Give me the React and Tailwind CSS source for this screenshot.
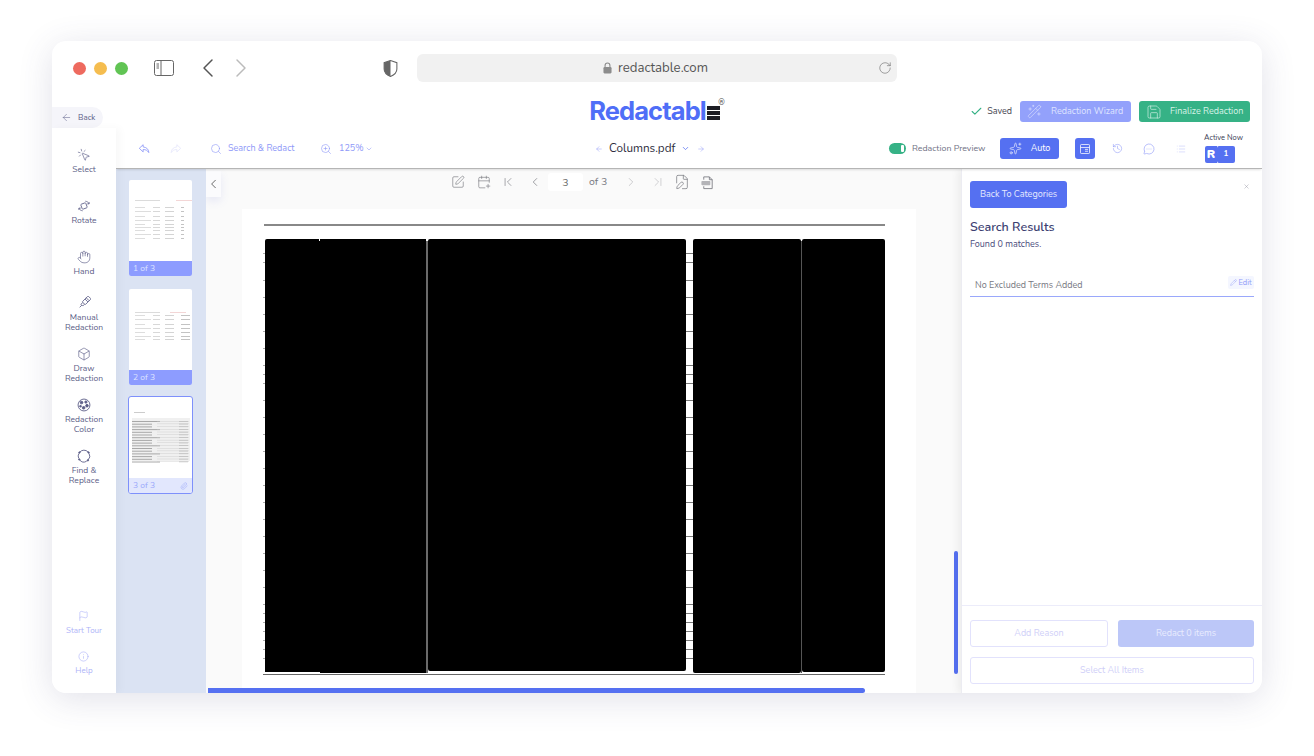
import {
  ArrowLeft, ArrowRight, Box, Check, ChevronDown, ChevronFirst, ChevronLast, ChevronLeft, ChevronRight,
  CalendarPlus, FilePen, Flag, Hand, History, Info, List, MessageCircleMore,
  MousePointerClick, Paperclip, Pencil, RotateCw, Save, Search, Sparkles, SquarePen,
  WandSparkles, X, ZoomIn,
} from 'lucide-react';

const FONT = "font-['Nunito','Lato','Noto_Sans',sans-serif]";

function RotateIcon({ className }) {
  return (
    <svg viewBox="0 0 16 16" fill="none" stroke="currentColor" strokeWidth="0.9" className={className}>
      <rect x="5" y="5" width="6" height="6" rx="1" transform="rotate(-20 8 8)" />
      <path d="M9.5 2.5c2 .2 3.6 1.4 4.3 3M13.8 3.4v2.2h-2.1M6.5 13.5c-2-.2-3.6-1.4-4.3-3M2.2 12.6v-2.2h2.1" />
    </svg>
  );
}

function MarkerIcon({ className }) {
  return (
    <svg viewBox="0 0 16 16" fill="none" stroke="currentColor" strokeWidth="0.9" className={className}>
      <g transform="rotate(45 8 8)">
        <rect x="5.6" y="-1" width="4.8" height="9.5" rx="1" />
        <path d="M5.6 2h4.8M5.6 4h4.8M6.6 8.5v3h2.8v-3M8 11.5V15" />
      </g>
    </svg>
  );
}

function ColorIcon({ className }) {
  return (
    <svg viewBox="0 0 16 16" fill="none" stroke="currentColor" strokeWidth="1" className={className}>
      <circle cx="8" cy="8" r="6.8" />
      <circle cx="5.2" cy="5.2" r="1.5" fill="currentColor" />
      <circle cx="10.2" cy="4.6" r="1.3" fill="currentColor" />
      <circle cx="11.4" cy="8.8" r="1.5" fill="currentColor" />
      <circle cx="7.6" cy="11.2" r="1.5" fill="currentColor" />
      <circle cx="4" cy="9.4" r="1" fill="currentColor" />
    </svg>
  );
}

function FindIcon({ className }) {
  return (
    <svg viewBox="0 0 16 16" fill="none" stroke="currentColor" strokeWidth="1" className={className}>
      <path d="M3.2 3.6A6.2 6.2 0 0 1 12.6 3.4M13.8 5a6.2 6.2 0 0 1-1.2 7.6M11 14a6.2 6.2 0 0 1-8-1.6M2 10.8A6.2 6.2 0 0 1 2.2 5" />
      <circle cx="2.8" cy="4" r="0.8" fill="currentColor" />
      <circle cx="13.2" cy="4" r="0.8" fill="currentColor" />
      <circle cx="2.6" cy="12" r="0.8" fill="currentColor" />
      <circle cx="12.4" cy="13" r="0.8" fill="currentColor" />
    </svg>
  );
}

function PanelIcon({ className }) {
  return (
    <svg viewBox="0 0 16 16" fill="none" stroke="currentColor" strokeWidth="1" className={className}>
      <rect x="2" y="2" width="12" height="12" rx="1" />
      <path d="M2 6h12M8 8.5h4M8 11h4" />
    </svg>
  );
}

function PdfIcon({ className }) {
  return (
    <svg viewBox="0 0 16 16" fill="none" stroke="currentColor" strokeWidth="0.9" className={className}>
      <path d="M4 5V2h6l3 3v9.5H4V12" />
      <path d="M10 2v3h3" />
      <rect x="1.5" y="6.5" width="9.5" height="4.5" rx="0.8" fill="#b4b4b8" stroke="none" />
    </svg>
  );
}

function UndoIcon({ className }) {
  return (
    <svg viewBox="0 0 14 14" fill="none" stroke="currentColor" strokeWidth="1" strokeLinejoin="round" className={className}>
      <path d="M6 2 1.5 6.2 6 10.4V7.6c3 0 5 1 6.6 3.6 0-3.8-2.6-6.2-6.6-6.6z" />
    </svg>
  );
}

const TOOLS = [
  { label: ['Select'], Icon: MousePointerClick },
  { label: ['Rotate'], Icon: RotateIcon },
  { label: ['Hand'], Icon: Hand },
  { label: ['Manual', 'Redaction'], Icon: MarkerIcon },
  { label: ['Draw', 'Redaction'], Icon: Box },
  { label: ['Redaction', 'Color'], Icon: ColorIcon },
  { label: ['Find &', 'Replace'], Icon: FindIcon },
];

function Sidebar() {
  return (
    <aside className="w-[64px] shrink-0 bg-white flex flex-col pt-[7px] pb-[17px] z-20 shadow-[4px_0_8px_rgba(0,0,0,0.03)]">
      {TOOLS.map(({ label, Icon }) => (
        <div key={label[0]} className="h-[51px] shrink-0 flex flex-col items-center justify-center text-[#5a5c86]">
          <Icon className="w-[14px] h-[14px] my-px" strokeWidth={1.1} />
          <div className="mt-px text-[8.5px] leading-[10px] text-center">
            {label.map((l) => <div key={l}>{l}</div>)}
          </div>
        </div>
      ))}
      <div className="mt-auto flex flex-col items-center gap-[15px] text-[#adb2f8]">
        <div className="flex flex-col items-center">
          <Flag className="w-[11px] h-[12px] mb-[4px]" strokeWidth={1.3} />
          <span className="text-[8px] leading-[10px]">Start Tour</span>
        </div>
        <div className="flex flex-col items-center">
          <Info className="w-[11px] h-[11px] mb-[4px]" strokeWidth={1.3} />
          <span className="text-[8px] leading-[10px]">Help</span>
        </div>
      </div>
    </aside>
  );
}

function Toolbar() {
  return (
    <div className="h-[41px] shrink-0 flex items-center pt-px pl-[22px] bg-white border-b border-b-[#b5b5b5] shadow-[0_2px_2px_-1px_rgba(0,0,0,0.12)] z-10 relative text-[#8e98f8]">
      <UndoIcon className="w-[12px] h-[12px]" />
      <UndoIcon className="w-[12px] h-[12px] ml-[20px] -scale-x-100 text-[#e6e8fb]" />
      <Search className="w-[12px] h-[12px] ml-[28px]" strokeWidth={1.2} />
      <span className="ml-[6px] text-[9px] w-[67px] whitespace-nowrap">Search &amp; Redact</span>
      <ZoomIn className="w-[12px] h-[12px] ml-[25px]" strokeWidth={1.2} />
      <span className="ml-[7px] text-[9px] w-[25px]">125%</span>
      <ChevronDown className="w-[8px] h-[8px] ml-[1px]" strokeWidth={1.6} />

      <ArrowLeft className="w-[8px] h-[8px] ml-[222px]" strokeWidth={1.4} />
      <span className="ml-[6px] text-[11.7px] text-[#2c2c3c] w-[66px] whitespace-nowrap">Columns.pdf</span>
      <ChevronDown className="w-[9px] h-[9px] ml-[6px] text-[#5570f1]" strokeWidth={2} />
      <ArrowRight className="w-[8px] h-[8px] ml-[7px]" strokeWidth={1.4} />

      <div className="ml-[184px] w-[17px] h-[11px] rounded-full bg-[#36b286] flex items-center justify-end pr-[2px]">
        <div className="w-[3px] h-[7px] rounded-[1px] bg-white" />
      </div>
      <span className="ml-[6px] text-[8.8px] text-[#6f7184] w-[74px] whitespace-nowrap">Redaction Preview</span>
      <button className="ml-[14px] w-[59px] h-[21px] rounded-[3px] bg-[#5570f1] text-white text-[9px] flex items-center justify-center gap-[9px]">
        <Sparkles className="w-[13px] h-[13px]" strokeWidth={1.1} />
        Auto
      </button>
      <button className="ml-[16px] w-[20px] h-[21px] rounded-[3px] bg-[#5570f1] text-white flex items-center justify-center">
        <PanelIcon className="w-[12px] h-[12px]" />
      </button>
      <History className="w-[11px] h-[11px] ml-[17px]" strokeWidth={1.2} />
      <MessageCircleMore className="w-[12px] h-[12px] ml-[20px]" strokeWidth={1.2} />
      <List className="w-[10px] h-[10px] ml-[21px] text-[#c3c8fa]" strokeWidth={1.4} />
      <div className="ml-[18px] -mt-[2px] flex flex-col items-start">
        <span className="text-[7.5px] leading-[10px] text-[#3b3d55] whitespace-nowrap">Active Now</span>
        <div className="flex mt-[3px] ml-px">
          <span className="w-[12px] h-[17px] bg-[#5570f1] text-white text-[12px] font-black rounded-l-[2px] flex items-center justify-center">R</span>
          <span className="w-[18px] h-[17px] bg-[#5570f1] text-white text-[8px] font-bold rounded-[2px] flex items-center justify-center">1</span>
        </div>
      </div>
    </div>
  );
}

const THUMB_ROWS = {
  1: [27, 31, 36, 40, 44, 47, 50, 54, 58],
  2: [26, 30, 35, 39, 43, 47, 50],
};

function ThumbDoc({ n }) {
  if (n === 3) {
    const rows = [...Array(16)].map((_, i) => 24 + i * 2.7);
    return (
      <svg viewBox="0 0 63 81" className="w-full h-full">
        <rect x="5" y="15" width="11" height="1" fill="#ccc" />
        <rect x="3" y="21" width="58" height="43" fill="#f0f0f0" />
        {rows.map((y, i) => (
          <g key={y}>
            <rect x="3" y={y} width={i % 3 === 0 ? 28 : 20} height="1" fill="#a8a8a8" />
            <rect x="28" y={y} width="32" height="0.4" fill="#c8c8c8" />
            <rect x="50" y={y} width="9" height="0.7" fill="#bbb" />
          </g>
        ))}
      </svg>
    );
  }
  const rows = THUMB_ROWS[n];
  return (
    <svg viewBox="0 0 63 81" className="w-full h-full">
      <rect x="6" y={n === 1 ? 20 : 23} width="25" height="0.7" fill="#ccc" />
      <rect x={n === 1 ? 47 : 41} y={n === 1 ? 20 : 23} width="16" height="0.7" fill="#eec4c4" />
      {rows.map((y, i) => (
        <g key={y}>
          <rect x="6" y={y} width={i % 2 ? 16 : 10} height="0.5" fill="#bbb" />
          <rect x="24" y={y} width="7" height="0.5" fill="#b0b0b0" />
          <rect x="36" y={y} width="9" height="0.6" fill="#b8b8b8" />
          <rect x="52" y={y} width={n === 1 ? 3 : 9} height="0.7" fill="#aaa" />
        </g>
      ))}
    </svg>
  );
}

function ThumbRail() {
  return (
    <div className="w-[90px] shrink-0 bg-[#dbe3f3] flex flex-col pt-[11px] pl-[13px] gap-[13px]">
      {[1, 2].map((n) => (
        <div key={n} className="w-[63px] h-[96px] bg-white rounded-[2px] overflow-hidden flex flex-col">
          <div className="flex-1 min-h-0"><ThumbDoc n={n} /></div>
          <div className="h-[15px] bg-[#8d9cff] text-[#dfe4ff] text-[8.5px] pl-[4px] flex items-center">{n} of 3</div>
        </div>
      ))}
      <div className="-mt-[2px] -ml-[1px] w-[65px] h-[98px] bg-white rounded-[3px] border-[1.5px] border-[#7e90fb] overflow-hidden flex flex-col">
        <div className="flex-1 min-h-0"><ThumbDoc n={3} /></div>
        <div className="h-[15px] bg-[#e2e7fd] text-[#9aa7fb] text-[8.5px] px-[4px] flex items-center justify-between">
          3 of 3
          <Paperclip className="w-[8px] h-[8px]" strokeWidth={1.4} />
        </div>
      </div>
    </div>
  );
}

const TICKS = [14, 23, 41, 58, 75, 92, 109, 126, 135, 144, 161, 178, 195, 212, 229, 246, 263, 280, 297, 314, 331, 348, 365, 374, 383, 392, 401, 410, 419];

function Ticks({ className }) {
  return (
    <svg viewBox="0 0 7 435" preserveAspectRatio="none" className={className}>
      {TICKS.map((y) => <rect key={y} x="0" y={y} width="7" height="1" fill="#777" />)}
    </svg>
  );
}

function PdfPage() {
  return (
    <div className="ml-[36px] w-[674px] flex-1 min-h-0 bg-white pt-[15px]">
      <div className="ml-[22px] w-[621px] h-[1.5px] bg-[#888]" />
      <div className="mt-[13px] ml-[21px] flex h-[435px] items-start">
        <Ticks className="w-[2px] h-full opacity-60" />
        <div className="w-[54px] h-[433px] bg-black rounded-tl-[2px]" />
        <div className="w-px h-[433px] bg-black border-t-2 border-t-white" />
        <div className="w-[106px] h-[434px] bg-black" />
        <div className="w-[2px] h-[434px] bg-[#6a6a6a] border-t-2 border-t-white" />
        <div className="w-[258px] h-[432px] bg-black rounded-[2px]" />
        <Ticks className="w-[7px] h-full" />
        <div className="w-[108px] h-[434px] bg-black rounded-[2px]" />
        <div className="w-px h-[434px] bg-[#555] border-t-2 border-t-white" />
        <div className="w-[83px] h-[433px] bg-black rounded-[2px]" />
      </div>
      <div className="ml-[21px] w-[622px] h-[1.5px] bg-[#666]" />
    </div>
  );
}

function Viewer() {
  return (
    <div className="flex-1 min-w-0 bg-[#fafafa] relative flex flex-col overflow-hidden">
      <button className="absolute left-0 top-[2px] w-[15px] h-[26px] bg-[#fbfbfd] shadow-[0_4px_8px_rgba(120,130,220,0.14)] flex items-center justify-center text-[#555]">
        <ChevronLeft className="w-[16px] h-[16px]" strokeWidth={1.4} />
      </button>
      <div className="h-[40px] shrink-0 flex items-start pt-[4px] pl-[245px] text-[#77787f]">
        <div className="h-[18px] flex items-center">
          <SquarePen className="w-[14px] h-[14px]" strokeWidth={1.1} />
          <CalendarPlus className="w-[14px] h-[14px] ml-[12px]" strokeWidth={1.1} />
          <ChevronFirst className="w-[14px] h-[14px] ml-[10px]" strokeWidth={1.1} />
          <ChevronLeft className="w-[14px] h-[14px] ml-[13px]" strokeWidth={1.2} />
          <input readOnly value="3" className="ml-[6px] w-[35px] h-[18px] bg-white rounded-[3px] text-center text-[10.5px] text-[#666] outline-none" />
          <span className="ml-[6px] text-[10.5px] w-[18px] whitespace-nowrap text-[#77787f]">of 3</span>
          <ChevronRight className="w-[14px] h-[14px] ml-[17px] text-[#b8b8bc]" strokeWidth={1.2} />
          <ChevronLast className="w-[14px] h-[14px] ml-[13px] text-[#b8b8bc]" strokeWidth={1.1} />
          <FilePen className="w-[16px] h-[16px] ml-[9px]" strokeWidth={1.1} />
          <PdfIcon className="w-[15px] h-[15px] ml-[10px]" />
        </div>
      </div>
      <PdfPage />
      <div className="absolute right-[3px] top-[382px] w-[4px] h-[123px] rounded-full bg-[#5570f1]" />
      <div className="absolute left-[2px] bottom-0 w-[657px] h-[5px] rounded-r-full bg-[#5570f1]" />
    </div>
  );
}

function ResultsPanel() {
  return (
    <div className="w-[301px] shrink-0 bg-white border-l border-l-[#ececf2] shadow-[-3px_0_8px_rgba(0,0,0,0.06)] z-[5] flex flex-col">
      <div className="flex-1 min-h-0 pt-[12px] pl-[8px] pr-[8px] border-b border-b-[#ececfa]">
        <div className="flex items-start justify-between">
          <button className="w-[97px] h-[27px] rounded-[3px] bg-[#5570f1] text-[#e6eaff] text-[9px]">Back To Categories</button>
          <X className="w-[7px] h-[7px] mt-[2px] mr-[4px] text-[#9a9aa6]" strokeWidth={1.6} />
        </div>
        <h2 className="mt-[10px] text-[12.5px] leading-[18px] font-semibold text-[#3d3f72]">Search Results</h2>
        <p className="mt-[1px] text-[9px] leading-[14px] text-[#4a4c7c]">Found 0 matches.</p>
        <div className="mt-[18px] h-[28px] border-b border-b-[#9aa8fb] flex items-start justify-between pl-[5px]">
          <span className="mt-[9px] text-[9px] leading-[14px] text-[#77787f]">No Excluded Terms Added</span>
          <span className="mt-[7px] w-[26px] h-[13px] bg-[#f4f6ff] rounded-[2px] text-[#8e98f8] text-[7.5px] flex items-center justify-center gap-[1px]">
            <Pencil className="w-[7px] h-[7px]" strokeWidth={1.3} />
            Edit
          </span>
        </div>
      </div>
      <div className="h-[87px] shrink-0 pt-[14px] pl-[8px] pr-[8px] flex flex-col gap-[10px] text-[9px]">
        <div className="flex gap-[10px]">
          <button className="flex-1 h-[27px] rounded-[3px] border border-[#e2e2fc] text-[#cfcff8]">Add Reason</button>
          <button className="flex-1 h-[27px] rounded-[3px] bg-[#bcc7f8] text-[#e9ecfe]">Redact 0 items</button>
        </div>
        <button className="h-[27px] rounded-[3px] border border-[#e2e2fc] text-[#cfcff8]">Select All Items</button>
      </div>
    </div>
  );
}

export default function App() {
  return (
    <div className={`w-[1314px] h-[756px] bg-white pt-[41px] pl-[52px] overflow-hidden ${FONT}`}>
      <div className="w-[1210px] h-[652px] bg-white rounded-[14px] overflow-hidden flex flex-col shadow-[0_6px_34px_rgba(70,70,120,0.16)]">
        {/* browser chrome */}
        <div className="h-[54px] shrink-0 flex items-center pl-[21px]">
          <span className="w-[13px] h-[13px] rounded-full bg-[#ee6a5f]" />
          <span className="ml-[8px] w-[13px] h-[13px] rounded-full bg-[#f5bd4f]" />
          <span className="ml-[8px] w-[13px] h-[13px] rounded-full bg-[#61c454]" />
          <svg viewBox="0 0 20 16" fill="none" stroke="#666" strokeWidth="1" className="ml-[26px] w-[20px] h-[16px]">
            <rect x="0.5" y="0.5" width="19" height="15" rx="2" />
            <path d="M7 .5v15M2.5 4h2.5M2.5 6h2.5M2.5 8h2.5" />
          </svg>
          <ChevronLeft className="ml-[18px] w-[32px] h-[32px] text-[#555]" strokeWidth={1.1} />
          <ChevronRight className="ml-px w-[32px] h-[32px] text-[#bbb]" strokeWidth={1.1} />
          <svg viewBox="0 0 14 16" className="ml-[126px] w-[15px] h-[17px]">
            <path d="M7 .5 1 2.5v6c0 3.4 2.6 5.6 6 7 3.4-1.4 6-3.6 6-7v-6z" fill="none" stroke="#666" strokeWidth="1" />
            <path d="M7 .5 1 2.5v6c0 3.4 2.6 5.6 6 7z" fill="#666" />
          </svg>
          <div className="ml-[19px] w-[480px] h-[28px] rounded-[6px] bg-[#f1f1f1] relative flex items-center justify-center gap-[6px] pr-[3px] text-[#555]">
            <svg viewBox="0 0 10 13" className="w-[9px] h-[12px]">
              <path d="M2.3 6V3.6a2.7 2.7 0 0 1 5.4 0V6" fill="none" stroke="#8c8c8c" strokeWidth="1.2" />
              <rect x="0.5" y="5.5" width="9" height="7" rx="1.2" fill="#8c8c8c" />
            </svg>
            <span className="pt-[2px] text-[13.2px]">redactable.com</span>
            <RotateCw className="absolute right-[5px] w-[14px] h-[14px] text-[#666]" strokeWidth={1} />
          </div>
        </div>

        {/* logo row */}
        <div className="h-[33px] shrink-0 grid grid-cols-[1fr_auto_1fr] items-start">
          <div className="self-end">
            <div className="w-[51px] h-[21px] rounded-r-full bg-[#f5f5fa] flex items-center pl-[9px] gap-[6px] text-[#5a5c86]">
              <ArrowLeft className="w-[11px] h-[11px]" strokeWidth={1.1} />
              <span className="text-[8px]">Back</span>
            </div>
          </div>
          <div className="mt-[3px] h-[26px] flex items-center relative pr-[5px]">
            <span className="font-['Inter',sans-serif] font-bold text-[25.5px] leading-none tracking-[-0.9px] text-[#4f6ef7]">Redactabl</span>
            <span className="ml-[1px] mt-[4px] flex flex-col gap-[1.5px]">
              <span className="block w-[13px] h-[3.5px] bg-[#1d1d24]" />
              <span className="block w-[13px] h-[3.5px] bg-[#1d1d24]" />
              <span className="block w-[13px] h-[3.5px] bg-[#1d1d24]" />
            </span>
            <span className="absolute right-0 top-[-1px] text-[8px] text-[#444]">®</span>
          </div>
          <div className="mt-[6px] pr-[12px] flex items-center justify-end text-[9px]">
            <Check className="w-[13px] h-[13px] text-[#36b286]" strokeWidth={2} />
            <span className="ml-[4px] text-[#44444f]">Saved</span>
            <button className="ml-[8px] w-[111px] h-[21px] rounded-[3px] bg-[#93a1fb] text-[#dfe4ff] flex items-center pl-[7px] gap-[9px]">
              <WandSparkles className="w-[15px] h-[15px]" strokeWidth={1} />
              Redaction Wizard
            </button>
            <button className="ml-[8px] w-[111px] h-[21px] rounded-[3px] bg-[#36b286] text-[#d8f3e8] flex items-center pl-[7px] gap-[8px]">
              <Save className="w-[16px] h-[16px]" strokeWidth={1} />
              Finalize Redaction
            </button>
          </div>
        </div>

        {/* app */}
        <div className="flex-1 min-h-0 flex">
          <Sidebar />
          <div className="flex-1 min-w-0 flex flex-col">
            <Toolbar />
            <div className="flex-1 min-h-0 flex">
              <ThumbRail />
              <Viewer />
              <ResultsPanel />
            </div>
          </div>
        </div>
      </div>
    </div>
  );
}
